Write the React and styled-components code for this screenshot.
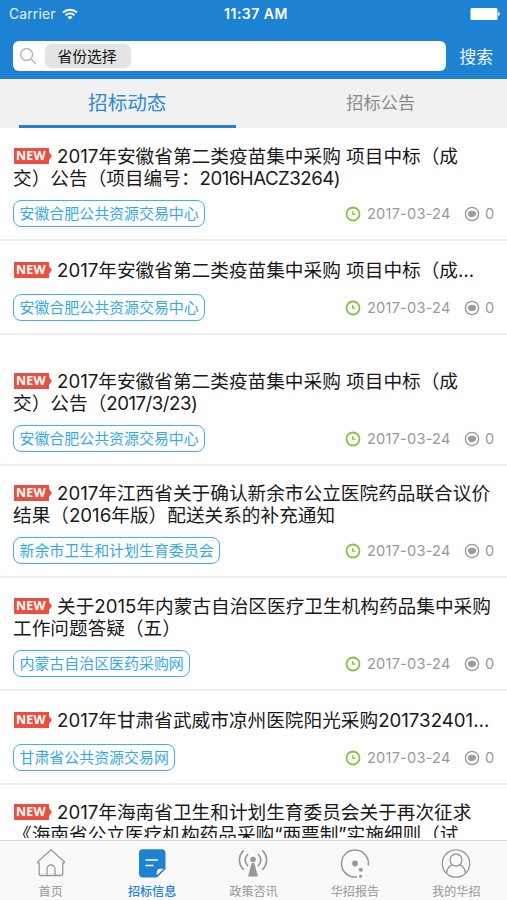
import React from 'react';
import styled, { createGlobalStyle } from 'styled-components';

const GlobalStyle = createGlobalStyle`
  * { box-sizing: border-box; }
  body {
    margin: 0;
    background: #fff;
    font-family: Inter, "Noto Sans CJK SC", sans-serif;
    color: #1a1a1a;
  }
`;

const Screen = styled.div`
  width: 507px;
  height: 900px;
  display: flex;
  flex-direction: column;
  overflow: hidden;
  background: #fff;
`;

const Header = styled.header`
  flex: none;
  height: 79px;
  background: #1e82d3;
  color: #fff;
`;

const StatusBar = styled.div`
  height: 28px;
  padding: 0 7px 0 9px;
  display: grid;
  grid-template-columns: 1fr auto 1fr;
  align-items: center;
  font-size: 14px;
  line-height: 28px;
`;

const Carrier = styled.div`
  display: flex;
  align-items: center;
  gap: 6px;
  font-size: 13.8px;
  letter-spacing: 0.2px;
  color: #e9f3fc;
`;

const Clock = styled.div`
  font-weight: 600;
  font-size: 14px;
  letter-spacing: 0.5px;
  padding-left: 3px;
`;

const BatteryIcon = styled.svg`
  justify-self: end;
`;

const SearchRow = styled.div`
  display: flex;
  align-items: center;
  padding: 13px 14px 0 13px;
`;

const SearchField = styled.div`
  width: 433px;
  height: 30px;
  display: flex;
  align-items: center;
  padding-left: 6px;
  gap: 8px;
  border-radius: 6px;
  background: #fff;
`;

const Province = styled.button`
  width: 86px;
  height: 24px;
  padding: 0 2px 0 0;
  border: 0;
  border-radius: 7px;
  background: #e3e3e3;
  color: #111;
  font: 14.8px/24px "Noto Sans CJK SC", sans-serif;
`;

const SearchButton = styled.button`
  margin-left: auto;
  padding: 0;
  border: 0;
  background: none;
  color: #f2f8fd;
  font: 16.8px/28px "Noto Sans CJK SC", sans-serif;
`;

const Tabs = styled.nav`
  flex: none;
  height: 49px;
  display: grid;
  grid-template-columns: 1fr 1fr;
  background: #f1f1f1;
`;

const Tab = styled.div`
  height: 49px;
  display: flex;
  justify-content: center;
  margin: 0 18px 0 19px;
  border-bottom: ${(p) => (p.$active ? '3px solid #1e82d3' : '0')};
  color: ${(p) => (p.$active ? '#2f88d2' : '#8b8b8b')};
  font-size: ${(p) => (p.$active ? '19.6px' : '17.2px')};
  line-height: 48px;
`;

const List = styled.main`
  flex: none;
  height: 710px;
  overflow: hidden;
`;

const Item = styled.article`
  height: ${(p) => p.$height}px;
  padding: ${(p) => p.$top}px 12px 12px 13px;
  display: flex;
  flex-direction: column;
  border-bottom: 2px solid #efefef;
`;

const TitleLine = styled.div`
  flex: none;
  height: 22px;
  display: flex;
  align-items: center;
  white-space: pre;
  font-size: 18.67px;
  line-height: 22px;
  color: #191919;
`;

const Condensed = styled.span`
  letter-spacing: -0.5px;
`;

const Badge = styled.span`
  flex: none;
  width: 38px;
  height: 16px;
  margin: -2px 5px 0 1px;
  padding: 0 0 0 2px;
  background: #e9503f;
  clip-path: polygon(0 0, 35px 0, 35px 4px, 38px 8px, 35px 12px, 35px 16px, 0 16px);
  color: #fff;
  font: 700 12.5px/15px "Open Sans", sans-serif;
  letter-spacing: 0.2px;
`;

const ItemFooter = styled.div`
  margin-top: auto;
  height: 27px;
  display: flex;
  align-items: center;
`;

const Source = styled.span`
  height: 27px;
  padding: 0 5.5px;
  border: 1.5px solid #42b0ea;
  border-radius: 8px;
  color: #35a9e8;
  font: 14.95px/23px "Noto Sans CJK SC", sans-serif;
`;

const Meta = styled.div`
  margin-left: auto;
  display: flex;
  align-items: center;
  font-size: 14.6px;
  line-height: 27px;
  color: #999;
`;

const MetaDate = styled.span`
  width: 84px;
  margin: 0 13px 0 6px;
  padding-top: 1px;
  letter-spacing: 0.2px;
  white-space: nowrap;
`;

const Count = styled.span`
  width: 10px;
  margin-left: 5px;
  padding-top: 1px;
`;

const TabBar = styled.footer`
  flex: none;
  height: 60px;
  margin-top: 2px;
  display: grid;
  grid-template-columns: repeat(5, 1fr);
  background: #f9f9f9;
  border-top: 1px solid #d4d4d4;
`;

const NavItem = styled.div`
  display: flex;
  flex-direction: column;
  align-items: center;
  padding-top: 7px;
  color: ${(p) => (p.$active ? '#1e82e8' : '#969696')};
  font-size: 12.1px;
  line-height: 18px;
  font-weight: ${(p) => (p.$active ? 500 : 400)};
`;

const NavIcon = styled.svg`
  display: block;
  flex: none;
  margin-bottom: 3px;
`;

const WifiIcon = () => (
  <svg width="16" height="12" viewBox="0 0 16 12" fill="none" stroke="#fff" strokeWidth="1.9">
    <path d="M1 4.5a10.2 10.2 0 0 1 14 0M3.5 7.2a6.5 6.5 0 0 1 9 0" />
    <path d="M8 11.6 5.5 9.2a3.7 3.7 0 0 1 5 0Z" fill="#fff" stroke="none" />
  </svg>
);

const Battery = () => (
  <BatteryIcon width="31" height="12" viewBox="0 0 31 12" fill="#fff">
    <rect x="1.5" y="0" width="27" height="12" rx="1.5" />
    <path d="M29.2 4c2 .4 2 3.6 0 4Z" />
  </BatteryIcon>
);

const Magnifier = () => (
  <svg width="18" height="18" viewBox="0 0 18 18" fill="none" stroke="#b9b9b9" strokeWidth="1.5">
    <circle cx="7.6" cy="7.4" r="6" />
    <path d="m12 12 4.8 4.7" />
  </svg>
);

const ClockIcon = () => (
  <svg width="16" height="16" viewBox="0 0 16 16" fill="none" stroke="#84c344">
    <circle cx="8" cy="8" r="6.5" strokeWidth="1.8" />
    <path d="M7.7 5v3.2h2.8" strokeWidth="1.3" />
  </svg>
);

const CommentIcon = () => (
  <svg width="16" height="16" viewBox="0 0 16 16" fill="none" stroke="#9b9b9b">
    <circle cx="8" cy="8" r="6.6" strokeWidth="1.4" />
    <path d="M8 4.8c2.5 0 4.2 1.2 4.2 3S10.5 11 8 11l-2.6.3.1-1.1C4.4 9.6 3.8 8.8 3.8 7.8 3.8 6 5.5 4.8 8 4.8Z" fill="#9b9b9b" stroke="none" />
  </svg>
);

const icons = {
  home: (
    <g fill="none" stroke="#9a9a9a" strokeWidth="1.3" strokeLinejoin="round" strokeLinecap="round">
      <path d="M2.5 14 16 1.800 29.500 14l-.5 1h-1.200V25.500a2 2 0 0 1-2 2H6.200a2 2 0 0 1-2-2V15H3Z" />
      <path d="M12 27.500V21a4 4 0 0 1 8 0v6.500" />
    </g>
  ),
  news: (
    <g>
      <path d="M7 1.3h18.500a4 4 0 0 1 4 4v15.700L21 29.500H7a4 4 0 0 1-4-4V5.300a4 4 0 0 1 4-4Z" fill="#1e82d3" />
      <path d="M20.700 27.300v-2.600a4 4 0 0 1 4-4h3Z" fill="#fff" />
      <path d="M9.500 12h12.500M9.500 17.500h8" stroke="#fff" strokeWidth="1.4" />
    </g>
  ),
  radio: (
    <g fill="none" stroke="#989898" strokeWidth="1.7" strokeLinecap="round">
      <path d="M6.200 2.800c-5 5.200-5 13.200 0 18.400M10.600 6.500c-3.200 3.200-3.200 7.800 0 11M25.800 2.800c5 5.200 5 13.200 0 18.400M21.400 6.500c3.200 3.200 3.200 7.800 0 11" />
      <circle cx="16" cy="11.500" r="2.800" fill="#989898" stroke="none" />
      <path d="M14.700 15h2.600L21 28.500H11Z" fill="#989898" stroke="none" />
    </g>
  ),
  report: (
    <g fill="none" stroke="#989898" strokeWidth="1.5" strokeLinecap="round">
      <path d="M17.500 29A13.500 13.500 0 1 1 29.400 17" />
      <g fill="#989898" stroke="none">
        <circle cx="16" cy="15.500" r="2.900" />
        <circle cx="21.800" cy="21.800" r="2" />
        <circle cx="21.500" cy="28.200" r="1.500" />
      </g>
    </g>
  ),
  user: (
    <g fill="none" stroke="#989898" strokeWidth="1.3">
      <circle cx="16" cy="15.500" r="13.700" />
      <circle cx="16" cy="12" r="6" />
      <path d="M6.500 25.200c.5-4.700 2.800-7.500 6.200-8.300M25.500 25.200c-.5-4.700-2.800-7.500-6.200-8.300" />
    </g>
  ),
};

const anhui = '安徽合肥公共资源交易中心';

const items = [
  { height: 113, top: 18, lines: ['2017年安徽省第二类疫苗集中采购 项目中标（成', <span>交）公告（项目编号：<Condensed>2016HACZ3264)</Condensed></span>], source: anhui },
  { height: 94, top: 19, lines: ['2017年安徽省第二类疫苗集中采购 项目中标（成…'], source: anhui },
  { height: 131, top: 36, lines: ['2017年安徽省第二类疫苗集中采购 项目中标（成', <span>交）公告（<Condensed>2017/3/23)</Condensed></span>], source: anhui },
  { height: 112, top: 17, lines: ['2017年江西省关于确认新余市公立医院药品联合议价', '结果（2016年版）配送关系的补充通知'], source: '新余市卫生和计划生育委员会' },
  { height: 113, top: 18, lines: ['关于2015年内蒙古自治区医疗卫生机构药品集中采购', '工作问题答疑（五）'], source: '内蒙古自治区医药采购网' },
  { height: 94, top: 19, lines: ['2017年甘肃省武威市凉州医院阳光采购201732401…'], source: '甘肃省公共资源交易网' },
  { height: 112, top: 17, lines: ['2017年海南省卫生和计划生育委员会关于再次征求', '《海南省公立医疗机构药品采购“两票制”实施细则（试'] },
];

const navItems = [
  { icon: 'home', label: '首页' },
  { icon: 'news', label: '招标信息', active: true },
  { icon: 'radio', label: '政策咨讯' },
  { icon: 'report', label: '华招报告' },
  { icon: 'user', label: '我的华招' },
];

const NoticeItem = ({ item }) => (
  <Item $height={item.height} $top={item.top}>
    {item.lines.map((line, i) => (
      <TitleLine key={i}>
        {i === 0 && <Badge>NEW</Badge>}
        {line}
      </TitleLine>
    ))}
    {item.source && (
      <ItemFooter>
        <Source>{item.source}</Source>
        <Meta>
          <ClockIcon />
          <MetaDate>2017-03-24</MetaDate>
          <CommentIcon />
          <Count>0</Count>
        </Meta>
      </ItemFooter>
    )}
  </Item>
);

export default function App() {
  return (
    <Screen>
      <GlobalStyle />
      <Header>
        <StatusBar>
          <Carrier>Carrier <WifiIcon /></Carrier>
          <Clock>11:37 AM</Clock>
          <Battery />
        </StatusBar>
        <SearchRow>
          <SearchField>
            <Magnifier />
            <Province>省份选择</Province>
          </SearchField>
          <SearchButton>搜索</SearchButton>
        </SearchRow>
      </Header>
      <Tabs>
        <Tab $active>招标动态</Tab>
        <Tab>招标公告</Tab>
      </Tabs>
      <List>
        {items.map((item, i) => <NoticeItem key={i} item={item} />)}
      </List>
      <TabBar>
        {navItems.map((n) => (
          <NavItem key={n.label} $active={n.active}>
            <NavIcon width="32" height="32" viewBox="0 0 32 32">{icons[n.icon]}</NavIcon>
            {n.label}
          </NavItem>
        ))}
      </TabBar>
    </Screen>
  );
}
